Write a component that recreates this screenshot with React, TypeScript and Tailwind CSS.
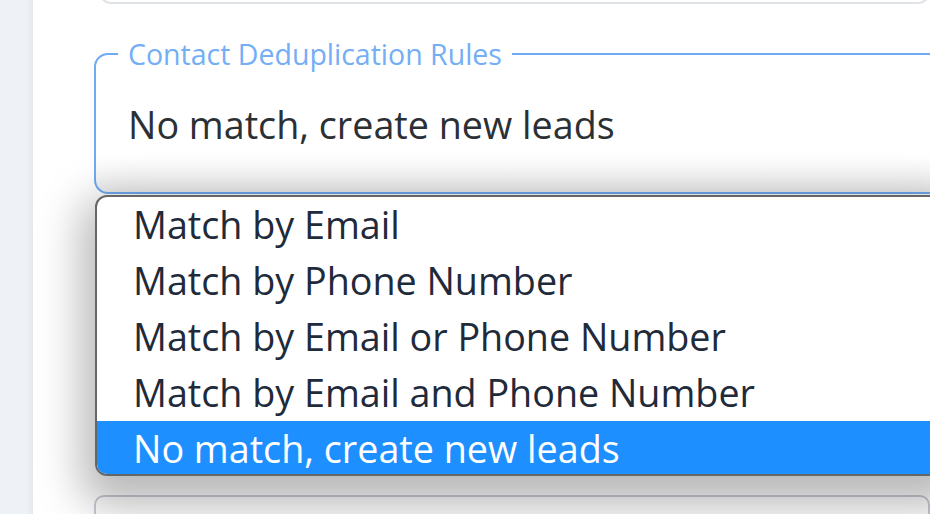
import React from "react";

const options = [
  "Match by Email",
  "Match by Phone Number",
  "Match by Email or Phone Number",
  "Match by Email and Phone Number",
  "No match, create new leads",
];

export default function App() {
  return (
    <div
      className="flex w-[930px] h-[514px] overflow-hidden bg-white"
      style={{ fontFamily: '"Open Sans", "Noto Sans", sans-serif' }}
    >
      <div className="w-[33px] shrink-0 bg-gradient-to-r from-[#eef1f5] from-80% to-[#e4e7ec]" />
      <div className="relative flex-1 overflow-hidden bg-white">
        {/* previous input (cut off at top) */}
        <div className="ml-[66px] mt-[-20px] h-[24px] rounded-b-[12px] border-2 border-t-0 border-[#dfe2e7]" />

        {/* fieldset */}
        <fieldset className="ml-[61px] mt-[30px] mr-[-40px] h-[160px] rounded-[14px] border-2 border-[#70aaf2] bg-gradient-to-b from-white from-75% to-[#efefef] px-[22px] pb-0 pt-0">
          <legend className="ml-[0px] px-[10px] text-[28.5px] leading-[40px] text-[#74aef5]">
            Contact Deduplication Rules
          </legend>
          <div className="ml-[10px] mt-[29px] text-[37.7px] leading-[44px] text-[#2b3035]">
            No match, create new leads
          </div>
        </fieldset>

        {/* next input, beneath dropdown */}
        <div className="ml-[61px] mt-[301px] h-[40px] rounded-t-[10px] border-2 border-[#c9cdd4]" />

        {/* dropdown list */}
        <div className="absolute left-[62px] right-[-20px] top-[195px] h-[281px] overflow-hidden rounded-[12px] border-2 border-[#666666] bg-white shadow-[0_16px_44px_14px_rgba(0,0,0,0.28)]">
          <div className="flex flex-col">
            {options.map((o, i) => (
              <div
                key={o}
                className={
                  i === options.length - 1
                    ? "h-[56px] bg-[#1e8fff] pl-[36px] text-[37.7px] leading-[56px] text-white"
                    : "h-[56px] pl-[36px] text-[37.7px] leading-[56px] text-[#1f2a3a]"
                }
              >
                {o}
              </div>
            ))}
          </div>
        </div>
      </div>
    </div>
  );
}
